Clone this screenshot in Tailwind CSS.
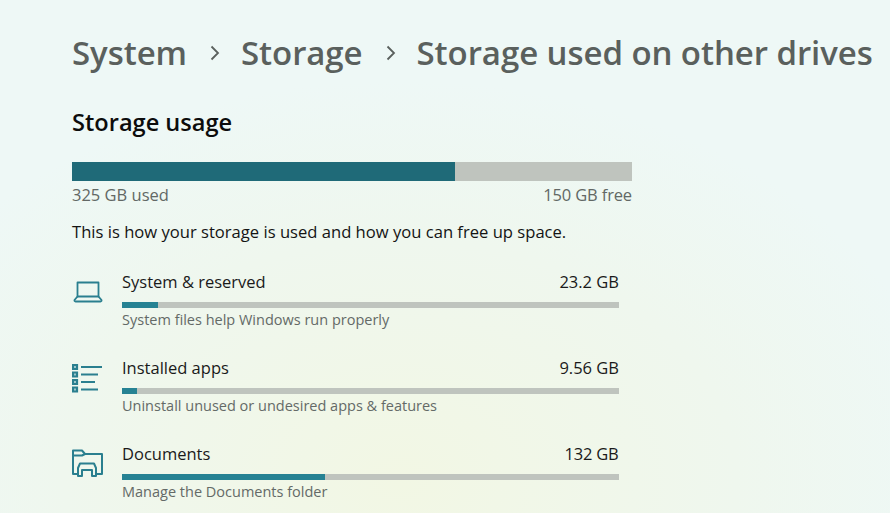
<!DOCTYPE html>
<html lang="en">
  <head>
    <meta charset="UTF-8" />
    <title>Storage used on other drives</title>
    <script src="https://cdn.jsdelivr.net/npm/@tailwindcss/browser@4"></script>
  </head>
  <body class="w-[890px] h-[513px] overflow-hidden font-['Open_Sans',sans-serif] bg-[radial-gradient(ellipse_560px_400px_at_400px_480px,#f2f7e4,#eff7ee_60%,#eef8f6)]">
    <main class="pl-[72px] w-[890px]">
      <!-- Breadcrumb -->
      <h1 class="flex items-center h-[106px] text-[33px] font-semibold tracking-[-0.07px] text-[#5a605d] whitespace-nowrap">
        <span>System</span>
        <svg class="w-[12px] h-[16px] ml-[22px] mr-[20px]" viewBox="0 0 12 16" fill="none" stroke="#5a605d" stroke-width="1.8"><path d="M2.500 1.500l6.500 6.500-6.500 6.500" /></svg>
        <span>Storage</span>
        <svg class="w-[12px] h-[16px] ml-[22px] mr-[20px]" viewBox="0 0 12 16" fill="none" stroke="#5a605d" stroke-width="1.8"><path d="M2.500 1.500l6.500 6.500-6.500 6.500" /></svg>
        <span>Storage used on other drives</span>
      </h1>

      <h2 class="-mt-[1px] text-[23.6px] leading-[34px] font-semibold text-[#0c0c0c]">Storage usage</h2>

      <!-- Overall usage -->
      <div class="w-[560px] mt-[23px]">
        <div class="h-[19px] bg-[#bfc4be]"><div class="h-full w-[383px] bg-[#1f6a78]"></div></div>
        <div class="flex justify-between text-[16.5px] leading-[28px] text-[#626865]">
          <span>325 GB used</span>
          <span class="tracking-[-0.15px]">150 GB free</span>
        </div>
        <p class="mt-[11px] text-[16.6px] leading-[24px] text-[#141414] whitespace-nowrap">This is how your storage is used and how you can free up space.</p>
      </div>

      <!-- Categories -->
      <div class="mt-[26px] flex flex-col gap-[24px]">
        <div class="flex">
          <div class="w-[50px] pt-[10px]">
            <svg class="block w-[32px] h-[24px]" viewBox="0 0 32 24" fill="none" stroke="#2a7f8f" stroke-width="1.800" stroke-linejoin="round"><path d="M5.500 2.500h21v14h-21z" /><path d="M5.500 16.500l-3 3.500q-.3 1.500 1 1.500h25q1.300 0 1-1.500l-3-3.500" /></svg>
          </div>
          <div class="w-[497px]">
            <div class="flex justify-between text-[16.5px] leading-[24px] text-[#1a1a1a]"><span>System &amp; reserved</span><span>23.2 GB</span></div>
            <div class="h-[6px] mt-[8px] bg-[#bfc4be]"><div class="h-full w-[36px] bg-[#268293]"></div></div>
            <p class="text-[14.5px] leading-[24px] text-[#646a67]">System files help Windows run properly</p>
          </div>
        </div>

        <div class="flex">
          <div class="w-[50px] pt-[8px]">
            <svg class="block w-[32px] h-[30px]" viewBox="0 0 32 30" fill="none" stroke="#2a7f8f" stroke-width="1.800"><path d="M9 3h21M9 10.500h17M9 18h14M9 25.500h17" /><path d="M1 1h4v4h-4zM1 8.500h4v4h-4zM1 16h4v4h-4zM1 23.500h4v4h-4z" stroke-width="2.200" fill="#a9cfd2" /></svg>
          </div>
          <div class="w-[497px]">
            <div class="flex justify-between text-[16.5px] leading-[24px] text-[#1a1a1a]"><span>Installed apps</span><span>9.56 GB</span></div>
            <div class="h-[6px] mt-[8px] bg-[#bfc4be]"><div class="h-full w-[15px] bg-[#268293]"></div></div>
            <p class="text-[14.5px] leading-[24px] text-[#646a67]">Uninstall unused or undesired apps &amp; features</p>
          </div>
        </div>

        <div class="flex">
          <div class="w-[50px] pt-[7px]">
            <svg class="block w-[32px] h-[29px]" viewBox="0 0 32 29" fill="none" stroke="#2a7f8f" stroke-width="2" stroke-linejoin="round"><path d="M6 25h-5v-23.500h9l3 3.500h17v20h-6" /><path d="M1 6.500h9l3-1.500" /><path d="M6 19l2-4.500h14l2 4.500v8h-4v-6h-10v6h-4z" /></svg>
          </div>
          <div class="w-[497px]">
            <div class="flex justify-between text-[16.5px] leading-[24px] text-[#1a1a1a]"><span>Documents</span><span class="pr-[0.5px] tracking-[-0.2px]">132 GB</span></div>
            <div class="h-[6px] mt-[8px] bg-[#bfc4be]"><div class="h-full w-[203px] bg-[#268293]"></div></div>
            <p class="text-[14.5px] leading-[24px] text-[#646a67]">Manage the Documents folder</p>
          </div>
        </div>
      </div>
    </main>
  </body>
</html>
